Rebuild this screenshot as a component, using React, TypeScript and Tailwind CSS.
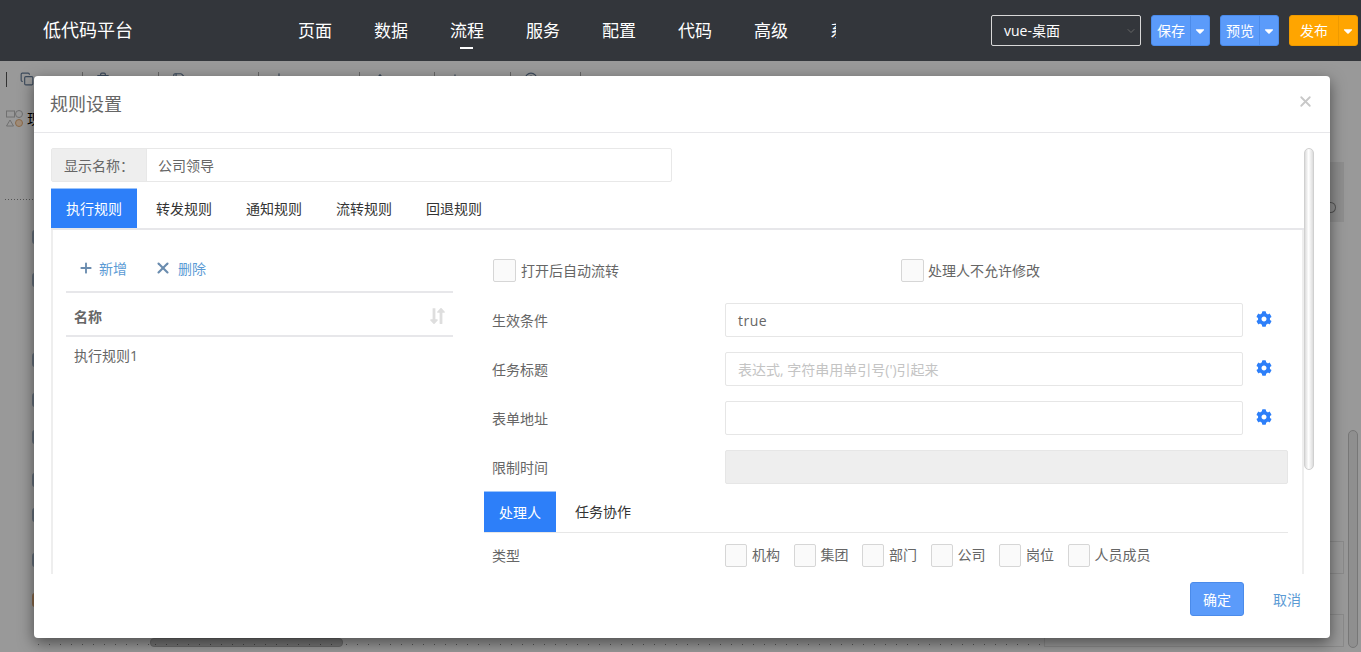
import { Plus, X, Copy, Trash2, Save, BarChart2, ArrowUp, ArrowDown, CircleHelp } from "lucide-react";
import { FaCog, FaCaretDown, FaLongArrowAltDown, FaLongArrowAltUp } from "react-icons/fa";
import { LuChevronDown } from "react-icons/lu";

const FONT = "font-['Open_Sans','Noto_Sans_CJK_SC',sans-serif]";

const NAV = ["页面", "数据", "流程", "服务", "配置", "代码", "高级", "系统"];

function SplitButton({ label, main, arrow, bg, edge }: { label: string; main: string; arrow: string; bg: string; edge: string }) {
  return (
    <div className={`flex h-[31px] rounded-[3px] border ${bg} ${edge} text-[14px] text-white`}>
      <div className={`flex items-center justify-center ${main}`}>{label}</div>
      <div className={`flex items-center justify-center border-l ${edge} ${arrow}`}>
        <FaCaretDown size={14} />
      </div>
    </div>
  );
}

function Header() {
  return (
    <header className="z-10 flex h-[61px] shrink-0 items-center bg-[#33363b] pl-[43px] text-white">
      <div className="w-[234px] text-[18px]">低代码平台</div>
      <nav className="flex h-[61px] w-[559px] overflow-hidden">
        {NAV.map((n, i) => (
          <div key={n} className="relative flex h-[61px] w-[76px] shrink-0 items-center justify-center text-[17px] text-white">
            <span>{n}</span>
            {i === 2 && <span className="absolute bottom-[12px] left-[31px] h-[2px] w-[13px] bg-white" />}
          </div>
        ))}
      </nav>
      <div className="ml-[155px] flex h-[31px] w-[150px] items-center justify-between rounded-[2px] border border-[#d8d8d8] pl-[12px] pr-[3px] text-[14px]">
        <span>vue-桌面</span>
        <LuChevronDown size={12} className="text-[#666]" />
      </div>
      <div className="ml-[10px]">
        <SplitButton label="保存" main="w-[38px]" arrow="w-[19px]" bg="bg-[#5b9bfa]" edge="border-[#4b8bea]" />
      </div>
      <div className="ml-[10px]">
        <SplitButton label="预览" main="w-[38px]" arrow="w-[19px]" bg="bg-[#5b9bfa]" edge="border-[#4b8bea]" />
      </div>
      <div className="ml-[10px]">
        <SplitButton label="发布" main="w-[48px]" arrow="w-[19px]" bg="bg-[#ffa500]" edge="border-[#ee9a00]" />
      </div>
    </header>
  );
}

function Backdrop() {
  const tools = [
    { icon: <Copy size={14} />, text: "复制", w: "w-[76px]" },
    { icon: <Trash2 size={14} />, text: "删除", w: "w-[76px]" },
    { icon: <Save size={14} />, text: "保存流程", w: "w-[100px]" },
    { icon: <BarChart2 size={14} />, text: "流程图示", w: "w-[101px]" },
    { icon: <ArrowUp size={14} />, text: "撤销", w: "w-[75px]" },
    { icon: <ArrowDown size={14} />, text: "重做", w: "w-[76px]" },
    { icon: <CircleHelp size={14} />, text: "帮助", w: "w-[70px]" },
  ];
  const peeks = ["mt-[30px]", "mt-[29px]", "mt-[66px]", "mt-[26px]", "mt-[23px]", "mt-[29px]", "mt-[21px]", "mt-[31px]", "mt-[26px]"];
  return (
    <div className="flex min-h-0 flex-1 flex-col bg-[#999999]">
      <div className="flex h-[27px] shrink-0 pl-[6px] pt-[11px] text-[14px] text-[#222]">
        <div className="h-[15px] w-[1px] bg-[#333]" />
        {tools.map((t) => (
          <div key={t.text} className={`flex h-[16px] items-start gap-[4px] border-r border-[#666] pl-[13px] ${t.w}`}>
            <span className="text-[#3d4b5c]">{t.icon}</span>
            <span className="pt-[3px] leading-[16px]">{t.text}</span>
          </div>
        ))}
      </div>
      <div className="flex min-h-0 flex-1">
        <div className="w-[34px] shrink-0 overflow-hidden">
          <div className="mt-[20px] flex items-center pl-[6px]">
            <svg width="17" height="17" viewBox="0 0 17 17" fill="none" className="shrink-0">
              <rect x="0.5" y="1" width="8" height="6" fill="none" stroke="#707070" />
              <circle cx="13" cy="4" r="3.5" stroke="#707070" />
              <path d="M4 10l3.5 6h-7z" stroke="#707070" />
              <ellipse cx="13" cy="13" rx="3.5" ry="3.5" stroke="#8a6a4a" fill="#a08c78" />
            </svg>
            <span className="ml-[4px] shrink-0 text-[14px] text-black">现</span>
          </div>
          <div className="ml-[5px] mt-[70px] h-[1px] bg-[linear-gradient(90deg,#555_1px,transparent_1px)] bg-[length:3px_1px]" />
          {peeks.map((m, i) => (
            <div key={i} className={`ml-[32px] ${m} h-[14px] w-[14px] rounded-[3px] border-2 ${i === 8 ? "border-[#8a6a4a]" : "border-[#66707c]"}`} />
          ))}
        </div>
        <div className="flex min-w-0 flex-1 flex-col justify-end">
          <div className="mb-[5px] flex h-[9px] bg-[linear-gradient(90deg,#555_1px,transparent_1px)] bg-[length:11px_1px] bg-[position:4px_6px] bg-repeat-x">
            <div className="ml-[116px] h-[9px] w-[193px] rounded-[4px] border border-[#6a6a6a] bg-[#777] bg-[linear-gradient(90deg,#444_1px,transparent_1px)] bg-[length:11px_1px] bg-[position:4px_5px] bg-repeat-x" />
            <div className="ml-auto h-[9px] w-[286px] border-b border-l border-[#8a8a8a] bg-[#999]" />
          </div>
        </div>
        <div className="flex w-[31px] shrink-0">
          <div className="flex w-[14px] flex-col">
            <div className="mt-[74px] flex h-[60px] items-end bg-[#8e8e8e] pb-[9px]">
              <div className="h-[11px] w-[6px] rounded-r-full border-y border-r border-[#555]" />
            </div>
            <div className="mt-[319px] h-[33px] border-y border-r border-[#8a8a8a]" />
            <div className="mt-[40px] h-[33px] border-y border-r border-[#8a8a8a]" />
          </div>
          <div className="ml-[4px] mt-[342px] h-[218px] w-[10px] rounded-[5px] border border-[#777] bg-[#8f8f8f]" />
        </div>
      </div>
    </div>
  );
}

function Check({ label, className = "", gap = "ml-[5px]" }: { label: string; className?: string; gap?: string }) {
  return (
    <label className={`flex items-center ${className}`}>
      <span className="h-[23px] w-[23px] shrink-0 rounded-[2px] border border-[#d6d6d6] bg-[#fafafa]" />
      <span className={`${gap} mt-[-1px] text-[14px] text-[#666]`}>{label}</span>
    </label>
  );
}

function Field({ label, children }: { label: string; children: React.ReactNode }) {
  return (
    <div className="flex h-[34px] items-center pl-[8px]">
      <div className="w-[233px] shrink-0 text-[14px] text-[#666]">{label}</div>
      {children}
    </div>
  );
}

function InputWithGear({ value, placeholder }: { value?: string; placeholder?: string }) {
  return (
    <>
      <div className="flex h-[34px] w-[518px] items-center rounded-[2px] border border-[#e6e6e6] px-[12px] text-[14px]">
        {value && <span className="tracking-[0.5px] text-[#666]">{value}</span>}
        {placeholder && <span className="text-[#c4c4c4]">{placeholder}</span>}
      </div>
      <FaCog size={16} className="ml-[13px] mt-[-2px] text-[#2d7ff9]" />
    </>
  );
}

function ListPane() {
  return (
    <div className="w-[387px] shrink-0">
      <div className="flex h-[63px] items-center border-b-2 border-[#e7e7ea] pl-[12px] pt-[15px] text-[14px] text-[#5b9bd5]">
        <Plus size={16} strokeWidth={2.8} className="text-[#6a8caf]" />
        <span className="ml-[5px]">新增</span>
        <X size={18} strokeWidth={2.8} className="ml-[27px] text-[#6a8caf]" />
        <span className="ml-[6px]">删除</span>
      </div>
      <div className="flex h-[44px] items-center justify-between border-b-2 border-[#e7e7ea] pl-[8px] pr-[3px] pt-[4px] text-[14px] font-bold text-[#666]">
        <span>名称</span>
        <span className="flex text-[#dedede]">
          <FaLongArrowAltDown size={18} className="mr-[-11px]" />
          <FaLongArrowAltUp size={18} />
        </span>
      </div>
      <div className="pl-[8px] pt-[8px] text-[14px] text-[#666]">执行规则1</div>
    </div>
  );
}

function RulePane() {
  const types = ["机构", "集团", "部门", "公司", "岗位", "人员成员"];
  return (
    <div className="ml-[31px] w-[804px] shrink-0">
      <div className="flex h-[73px] items-start pl-[9px] pt-[29px]">
        <Check label="打开后自动流转" className="w-[408px]" />
        <Check label="处理人不允许修改" gap="ml-[4px]" />
      </div>
      <div className="flex flex-col gap-[15px]">
        <Field label="生效条件"><InputWithGear value="true" /></Field>
        <Field label="任务标题"><InputWithGear placeholder="表达式, 字符串用单引号(')引起来" /></Field>
        <Field label="表单地址"><InputWithGear /></Field>
        <Field label="限制时间">
          <div className="h-[34px] w-[563px] rounded-[2px] border border-[#e6e6e6] bg-[#eeeeee]" />
        </Field>
      </div>
      <div className="mt-[7px] flex h-[42px] items-stretch border-b border-[#e7e7e7] text-[14px]">
        <div className="flex w-[72px] items-center justify-center border-t border-[#9cc4fa] bg-[#2d7ff9] text-white">处理人</div>
        <div className="flex w-[94px] items-center justify-center text-[#333]">任务协作</div>
      </div>
      <div className="flex items-center pl-[8px] pt-[11px]">
        <div className="w-[233px] shrink-0 text-[14px] text-[#666]">类型</div>
        {types.map((t) => (
          <label key={t} className="mr-[13.5px] flex items-center text-[14px] text-[#666]">
            <span className="h-[23px] w-[22px] shrink-0 rounded-[2px] border border-[#d6d6d6] bg-[#fafafa]" />
            <span className="ml-[5px] mt-[-2px]">{t}</span>
          </label>
        ))}
      </div>
    </div>
  );
}

function RuleModal() {
  const tabs = ["转发规则", "通知规则", "流转规则", "回退规则"];
  return (
    <div className="absolute left-[34px] top-[76px] z-20 flex h-[562px] w-[1296px] flex-col rounded-[4px] bg-white shadow-[0_5px_15px_rgba(0,0,0,0.5)]">
      <div className="flex h-[57px] shrink-0 items-center justify-between border-b border-[#e7e7ea] pl-[16px] pr-[16px]">
        <span className="mt-[1px] text-[18px] text-[#666]">规则设置</span>
        <X size={17} strokeWidth={2.6} className="mt-[-5px] text-[#c8c8c8]" />
      </div>
      <div className="flex h-[441px] shrink-0 pl-[17px] pt-[15px]">
        <div className="flex h-[426px] w-[1253px] shrink-0 flex-col overflow-hidden">
          <div className="flex h-[34px] w-[621px] shrink-0 rounded-[2px] border border-[#e8e8e8] text-[14px] text-[#666]">
            <div className="flex w-[95px] items-center justify-center border-r border-[#e8e8e8] bg-[#eeeeee]">显示名称：</div>
            <div className="flex items-center pl-[11px]">公司领导</div>
          </div>
          <div className="mt-[6px] flex h-[42px] shrink-0 border-b-2 border-[#e7e7ea] text-[14px] text-[#333]">
            <div className="flex w-[86px] items-center justify-center border-t border-[#9cc4fa] bg-[#2d7ff9] text-white">执行规则</div>
            {tabs.map((t) => (
              <div key={t} className="ml-[4px] flex w-[86px] items-center justify-center">{t}</div>
            ))}
          </div>
          <div className="flex min-h-0 flex-1 border-x-2 border-[#eeeeee] pl-[13px]">
            <ListPane />
            <RulePane />
          </div>
        </div>
        <div className="h-[322px] w-[10px] shrink-0 rounded-[5px] border border-[#d0d0d0] bg-[linear-gradient(90deg,#dcdcdc,#ffffff_45%,#dcdcdc)]" />
      </div>
      <div className="flex flex-1 items-start justify-end pr-[29px] pt-[8px]">
        <button className="h-[34px] w-[54px] rounded-[3px] border border-[#4b8bea] bg-[#5b9bfa] text-[14px] text-white">确定</button>
        <button className="ml-[29px] h-[34px] text-[14px] text-[#5b9bd5]">取消</button>
      </div>
    </div>
  );
}

export default function App() {
  return (
    <div className={`relative flex h-[652px] w-[1361px] flex-col overflow-hidden ${FONT}`}>
      <Header />
      <Backdrop />
      <RuleModal />
    </div>
  );
}
